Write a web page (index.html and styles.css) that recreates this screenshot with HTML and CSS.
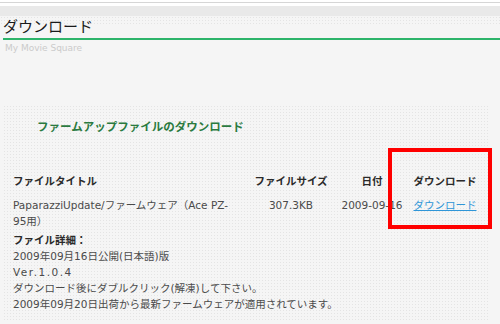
FILE: index.html
```html
<!DOCTYPE html>
<html lang="ja">
<head>
  <meta charset="UTF-8" />
  <title>ダウンロード</title>
  <link rel="stylesheet" href="styles.css">
</head>
<body>
  <div class="masthead">
    <h1 class="page-title">ダウンロード</h1>
    <div class="site-name">My Movie Square</div>
  </div>

  <div class="content">
    <h2 class="subhead">ファームアップファイルのダウンロード</h2>

    <table class="files">
      <colgroup>
        <col class="c-title">
        <col class="c-size">
        <col class="c-date">
        <col class="c-dl">
      </colgroup>
      <thead>
        <tr>
          <th class="left">ファイルタイトル</th>
          <th>ファイルサイズ</th>
          <th>日付</th>
          <th>ダウンロード</th>
        </tr>
      </thead>
      <tbody>
        <tr>
          <td class="left">PaparazziUpdate/ファームウェア（Ace PZ-<wbr>95用）</td>
          <td>307.3KB</td>
          <td>2009-09-16</td>
          <td><a href="#">ダウンロード</a></td>
        </tr>
      </tbody>
    </table>

    <div class="details">
      <div class="details-title">ファイル詳細：</div>
      <div>2009年09月16日公開(日本語)版</div>
      <div class="ver">Ver.1.0.4</div>
      <div>ダウンロード後にダブルクリック(解凍)して下さい。</div>
      <div>2009年09月20日出荷から最新ファームウェアが適用されています。</div>
    </div>
  </div>

  <div class="highlight"></div>
</body>
</html>
```

FILE: styles.css
```css
:root {
  --bg: #f5f5f5;
  --dots: #e4e4e4;
  --green-line: #2db46a;
  --green-text: #2a7a40;
  --text: #4a4a4a;
  --head: #2a2a2a;
  --link: #2f96d8;
}

body {
  margin: 0;
  background: var(--bg);
  color: var(--text);
  font-family: "DejaVu Sans", "Noto Sans CJK JP", sans-serif;
  font-size: 10.5px;
  overflow: hidden;
}

.masthead {
  height: 53px;
  background:
    linear-gradient(to bottom,
      #ffffff 0, #ffffff 2px,
      #d6d6d6 2px, #d6d6d6 3px,
      #ffffff 3px, #ffffff 6px,
      #e9e9e9 6px, #e9e9e9 16px,
      transparent 16px, transparent 24px,
      var(--bg) 24px),
    radial-gradient(circle, var(--dots) 0.7px, transparent 0.9px) 0 16px / 3px 3px;
  background-color: var(--bg);
}

.page-title {
  margin: 0 0 0 3px;
  padding-top: 16px;
  font-size: 15px;
  line-height: 22px;
  font-weight: normal;
  color: #1a1a1a;
  border-bottom: 2px solid var(--green-line);
}

.site-name {
  margin: 2px 0 0 5px;
  font-family: "DejaVu Sans", sans-serif;
  font-size: 9px;
  line-height: 12px;
  color: #cbcbcb;
}

.content {
  margin: 52px 10px 0 3px;
  padding: 14px 0 8px;
  background-image: radial-gradient(circle, var(--dots) 0.7px, transparent 0.9px);
  background-size: 3px 3px;
}

.subhead {
  margin: 0 0 0 34px;
  font-size: 11.5px;
  line-height: 16px;
  font-weight: bold;
  color: var(--green-text);
}

.files {
  margin: 34px 0 0 5px;
  border-collapse: collapse;
  table-layout: fixed;
  width: 470px;
}

.c-title { width: 242px; }
.c-size { width: 82px; }
.c-date { width: 80px; }
.c-dl { width: 66px; }

.files th,
.files td {
  padding: 4px 0;
  line-height: 16px;
  text-align: center;
  vertical-align: top;
  white-space: nowrap;
}

.files th {
  color: var(--head);
  font-weight: bold;
}

.files td {
  padding-bottom: 3px;
}

.files .left {
  text-align: left;
  padding-left: 5px;
  padding-right: 12px;
  white-space: normal;
}

.files a {
  color: var(--link);
}

.details {
  margin-left: 10px;
  line-height: 16px;
}

.details-title {
  font-weight: bold;
  color: var(--head);
}

.ver {
  letter-spacing: 1.5px;
}

.highlight {
  position: absolute;
  left: 388px;
  top: 148px;
  width: 96px;
  height: 73px;
  border: 4px solid #ff0000;
}
```
